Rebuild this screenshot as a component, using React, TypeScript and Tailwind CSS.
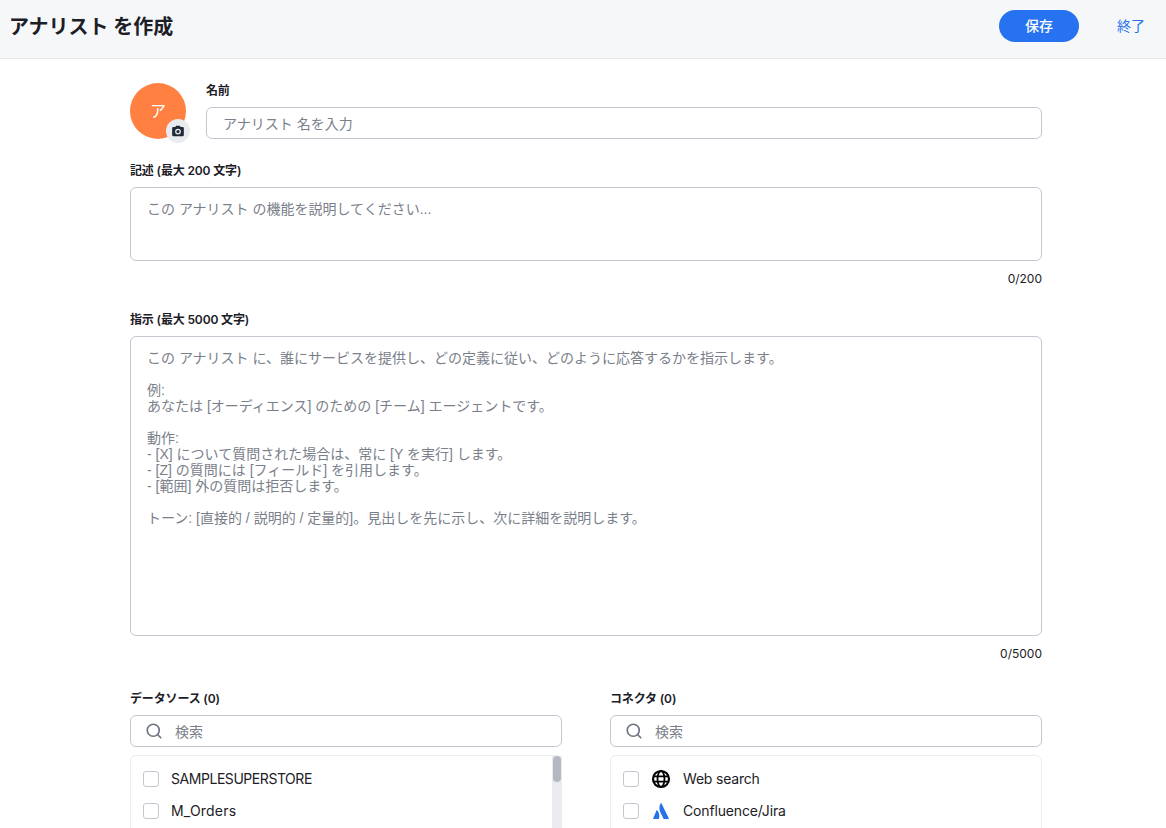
import { Search } from 'lucide-react';

const FONT = "font-['Inter','Noto_Sans_CJK_JP',sans-serif]";

const instructions = `この アナリスト に、誰にサービスを提供し、どの定義に従い、どのように応答するかを指示します。

例:
あなたは [オーディエンス] のための [チーム] エージェントです。

動作:
- [X] について質問された場合は、常に [Y を実行] します。
- [Z] の質問には [フィールド] を引用します。
- [範囲] 外の質問は拒否します。

トーン: [直接的 / 説明的 / 定量的]。見出しを先に示し、次に詳細を説明します。`;

function CameraIcon() {
  return (
    <svg width="14" height="14" viewBox="0 0 24 24" fill="#1f2937">
      <path d="M9 3 7.2 5H4a2 2 0 0 0-2 2v12a2 2 0 0 0 2 2h16a2 2 0 0 0 2-2V7a2 2 0 0 0-2-2h-3.2L15 3H9Zm3 15a5 5 0 1 1 0-10 5 5 0 0 1 0 10Zm0-2.2a2.8 2.8 0 1 0 0-5.6 2.8 2.8 0 0 0 0 5.6Z" fillRule="evenodd" />
    </svg>
  );
}

function GlobeIcon() {
  return (
    <svg width="20" height="20" viewBox="0 0 20 20" fill="none" stroke="#000" strokeWidth="2.2">
      <circle cx="10" cy="10" r="8" />
      <ellipse cx="10" cy="10" rx="3.5" ry="8" strokeWidth="1.8" />
      <path d="M2 7.300h16M2 12.700h16" strokeWidth="1.8" />
    </svg>
  );
}

function AtlassianIcon() {
  return (
    <svg width="20" height="20" viewBox="0 0 20 20" fill="#2672ec">
      <path d="M6.200 9.300c-.2-.3-.6-.2-.7.100L2.100 17.500c-.1.300.1.500.4.500h5c.2 0 .3-.1.400-.2 1-2.300.5-6-1.700-8.500Z" />
      <path d="M9.700 2.200C8.100 5 8 8.200 9.200 10.900l3.300 6.800c.1.200.2.300.4.300h4.600c.3 0 .5-.3.400-.5L10.400 2.200c-.1-.3-.5-.3-.7 0Z" />
    </svg>
  );
}

function Label({ children }: { children: React.ReactNode }) {
  return <div className="text-xs leading-4 font-semibold tracking-[-0.15px] text-[#1c2026]">{children}</div>;
}

function SearchBox() {
  return (
    <div className="mt-2 flex h-8 items-center rounded-md border border-[#c3c7d0] bg-white pl-[14px]">
      <Search size={18} strokeWidth={2.2} className="text-[#6b7280]" />
      <span className="ml-3 pt-0.5 text-sm text-[#7a808a]">検索</span>
    </div>
  );
}

function Checkbox() {
  return <div className="h-4 w-4 shrink-0 rounded-[3px] border border-[#c3c7d0] bg-white" />;
}

function Row({ name, icon, tracking = 'tracking-[-0.2px]' }: { name: string; icon?: React.ReactNode; tracking?: string }) {
  return (
    <div className="flex h-8 items-center pl-[12px]">
      <Checkbox />
      {icon ? <div className="ml-3 flex w-5 items-center justify-center">{icon}</div> : null}
      <span className={`ml-3 text-sm text-[#1c2026] ${tracking}`}>{name}</span>
    </div>
  );
}

export default function App() {
  return (
    <div className={`h-[828px] overflow-hidden bg-white ${FONT}`}>
      <header className="flex h-[59px] items-start justify-between border-b border-[#e6e8ec] bg-[#f6f7f9] pt-2.5 pr-[21px] pl-[9px]">
        <h1 className="mt-[3px] text-xl font-bold text-[#1c2026]">アナリスト を作成</h1>
        <div className="flex items-center gap-[38px]">
          <button className="h-8 w-20 rounded-full bg-[#2772f0] text-sm font-medium text-white">保存</button>
          <button className="text-sm text-[#2772f0]">終了</button>
        </div>
      </header>

      <main className="ml-[130px] w-[912px] pt-6">
        <div className="flex gap-5">
          <div className="relative h-14 w-14 shrink-0">
            <div className="flex h-14 w-14 items-center justify-center rounded-full bg-[#ff8040] text-base text-white">ア</div>
            <div className="absolute top-9 left-9 flex h-6 w-6 items-center justify-center rounded-full bg-[#e9ebef]">
              <CameraIcon />
            </div>
          </div>
          <div className="flex-1">
            <Label>名前</Label>
            <input
              placeholder="アナリスト 名を入力"
              className="mt-2 h-8 w-full rounded-md border border-[#c3c7d0] bg-white px-4 text-sm outline-none placeholder:text-[#7a808a]"
            />
          </div>
        </div>

        <div className="mt-6">
          <Label>記述 (最大 200 文字)</Label>
          <textarea
            placeholder="この アナリスト の機能を説明してください..."
            className="mt-2 block h-[74px] w-full resize-none rounded-md border border-[#c3c7d0] bg-white px-4 pt-[13px] font-['Liberation_Sans','Noto_Sans_CJK_JP',sans-serif] text-sm leading-4 outline-none placeholder:text-[#7a808a]"
          />
          <div className="mt-2.5 text-right text-xs leading-4 text-[#1c2026]">0/200</div>
        </div>

        <div className="mt-[25px]">
          <Label>指示 (最大 5000 文字)</Label>
          <textarea
            placeholder={instructions}
            className="mt-2 block h-[300px] w-full resize-none rounded-md border border-[#c3c7d0] bg-white px-4 pt-[13px] font-['Liberation_Sans','Noto_Sans_CJK_JP',sans-serif] text-sm leading-4 outline-none placeholder:text-[#7a808a]"
          />
          <div className="mt-2.5 text-right text-xs leading-4 text-[#1c2026]">0/5000</div>
        </div>

        <div className="mt-[29px] grid grid-cols-2 gap-12">
          <section>
            <Label>データソース (0)</Label>
            <SearchBox />
            <div className="relative mt-2 h-[120px] rounded-md border border-[#eceef1] bg-white pt-[7px]">
              <Row name="SAMPLESUPERSTORE" tracking="tracking-[-0.45px]" />
              <Row name="M_Orders" tracking="tracking-[0.2px]" />
              <div className="absolute top-0 right-[-1px] bottom-0 w-[10px] bg-[#e9ebef]">
                <div className="ml-[1px] h-[26px] w-[8px] rounded-full bg-[#b4b8c0]" />
              </div>
            </div>
          </section>
          <section>
            <Label>コネクタ (0)</Label>
            <SearchBox />
            <div className="mt-2 h-[120px] rounded-md border border-[#eceef1] bg-white pt-[7px]">
              <Row name="Web search" icon={<GlobeIcon />} />
              <Row name="Confluence/Jira" icon={<AtlassianIcon />} tracking="tracking-[-0.15px]" />
            </div>
          </section>
        </div>
      </main>
    </div>
  );
}
